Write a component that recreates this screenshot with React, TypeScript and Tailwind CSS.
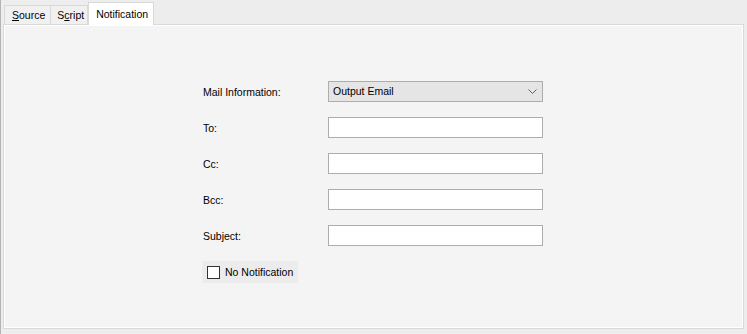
import React from 'react';

const fields = ['To:', 'Cc:', 'Bcc:', 'Subject:'];

function Tab({ label, active, pad }: { label: React.ReactNode; active?: boolean; pad?: string }) {
  if (active) {
    return (
      <div className="relative z-10 -mb-px flex h-[23px] items-start border border-b-0 border-[#d9d9d9] bg-white pl-[7px] pr-[5px] pt-[4px]">
        {label}
      </div>
    );
  }
  return (
    <div className={`flex h-[19px] items-center border border-b-0 border-r-0 border-[#d9d9d9] bg-[#f0f0f0] pt-px ${pad}`}>
      {label}
    </div>
  );
}

export default function App() {
  return (
    <div
      className="flex h-[334px] w-[747px] flex-col border-l border-[#b4b4b4] bg-[#ededed] pl-[2px] pt-[2px] text-[10.5px] text-black"
      style={{ fontFamily: '"Liberation Sans", Arial, sans-serif' }}
    >
      {/* Tab strip */}
      <div className="flex h-[22px] items-end pl-px">
        <Tab pad="pl-[7px] pr-[5px]" label={<span><span className="underline">S</span>ource</span>} />
        <div className="border-r border-[#d9d9d9]">
          <Tab pad="pl-[6px] pr-[3px]" label={<span>S<span className="underline">c</span>ript</span>} />
        </div>
        <Tab active label="Notification" />
      </div>

      {/* Panel */}
      <div className="h-[305px] w-[741px] border border-[#d9d9d9]">
        <div className="h-full w-full border border-white bg-[#f4f4f4] pl-[198px] pt-[55px]">
          <div className="flex flex-col gap-[15px]">
            <div className="flex h-[21px] items-center">
              <div className="w-[125px] pt-[2px]">Mail Information:</div>
              <div className="flex h-[21px] w-[215px] items-center justify-between border border-[#adadad] bg-[#e5e5e5] pl-[4px] pr-[5px]">
                <span className="pt-px">Output Email</span>
                <svg width="9" height="5" viewBox="0 0 9 5" fill="none">
                  <path d="M0.5 0.5 L4.5 4.5 L8.5 0.5" stroke="#606060" strokeWidth="1" />
                </svg>
              </div>
            </div>
            {fields.map((f) => (
              <div key={f} className="flex h-[21px] items-center">
                <div className="w-[125px] pt-[2px]">{f}</div>
                <div className="h-[21px] w-[215px] border border-[#adadad] bg-white" />
              </div>
            ))}
            <div className="-ml-px flex h-[22px] w-[96px] items-center gap-[5px] bg-[#ececec] pl-[5px]">
              <div className="h-[13px] w-[13px] border border-[#333333] bg-white" />
              <span className="pt-px">No Notification</span>
            </div>
          </div>
        </div>
      </div>
    </div>
  );
}
